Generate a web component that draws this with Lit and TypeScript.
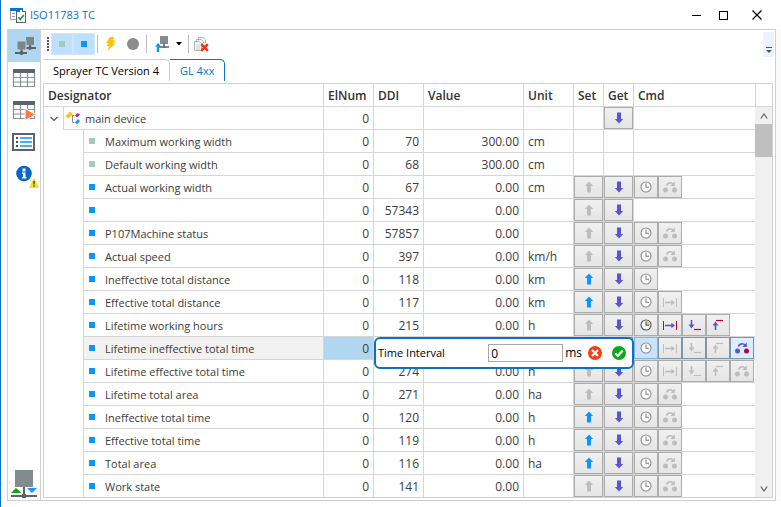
import { LitElement, html, css, svg, nothing } from "lit";
import { customElement, property } from "lit/decorators.js";
import { classMap } from "lit/directives/class-map.js";

type Cmd = "clock" | "interval" | "min" | "max" | "change";

interface Row {
  name: string;
  num?: number;
  ddi?: number;
  value?: string;
  unit?: string;
  kind?: "property" | "process";
  set?: "on" | "off";
  get?: boolean;
  cmds: Cmd[];
  active?: Cmd[];
  selected?: boolean;
}

const ROWS: Row[] = [
  { name: "Maximum working width", ddi: 70, value: "300.00", unit: "cm", kind: "property", cmds: [] },
  { name: "Default working width", ddi: 68, value: "300.00", unit: "cm", kind: "property", cmds: [] },
  { name: "Actual working width", ddi: 67, value: "0.00", unit: "cm", set: "off", get: true, cmds: ["clock", "change"] },
  { name: "", ddi: 57343, value: "0.00", unit: "", set: "off", get: true, cmds: [] },
  { name: "P107Machine status", ddi: 57857, value: "0.00", unit: "", set: "off", get: true, cmds: ["clock", "change"] },
  { name: "Actual speed", ddi: 397, value: "0.00", unit: "km/h", set: "off", get: true, cmds: ["clock", "change"] },
  { name: "Ineffective total distance", ddi: 118, value: "0.00", unit: "km", set: "on", get: true, cmds: ["clock"] },
  { name: "Effective total distance", ddi: 117, value: "0.00", unit: "km", set: "on", get: true, cmds: ["clock", "interval"] },
  { name: "Lifetime working hours", ddi: 215, value: "0.00", unit: "h", set: "off", get: true, cmds: ["clock", "interval", "min", "max"], active: ["clock", "interval", "min", "max"] },
  { name: "Lifetime ineffective total time", set: "off", get: true, cmds: ["clock", "interval", "min", "max", "change"], active: ["change"], selected: true },
  { name: "Lifetime effective total time", ddi: 274, value: "0.00", unit: "h", set: "off", get: true, cmds: ["clock", "interval", "min", "max", "change"] },
  { name: "Lifetime total area", ddi: 271, value: "0.00", unit: "ha", set: "off", get: true, cmds: ["clock", "change"] },
  { name: "Ineffective total time", ddi: 120, value: "0.00", unit: "h", set: "on", get: true, cmds: ["clock", "change"] },
  { name: "Effective total time", ddi: 119, value: "0.00", unit: "h", set: "on", get: true, cmds: ["clock", "change"] },
  { name: "Total area", ddi: 116, value: "0.00", unit: "ha", set: "on", get: true, cmds: ["clock", "change"] },
  { name: "Work state", ddi: 141, value: "0.00", unit: "", set: "off", get: true, cmds: ["clock", "change"] },
];

const GREY = "#bdbdbd";
const VIOLET = "#5a55d2";
const CRIMSON = "#b8003c";

const arrowUp = (color: string) => html`<svg width="10" height="12" viewBox="0 0 10 12" aria-hidden="true">
  <path d="M5 0.500 9.200 5H7V11.500H3V5H0.800Z" fill=${color} /></svg>`;
const arrowDown = (color: string) => html`<svg width="10" height="12" viewBox="0 0 10 12" aria-hidden="true">
  <path d="M5 11.500 9.200 7H7V0.500H3V7H0.800Z" fill=${color} /></svg>`;

function cmdIcon(cmd: Cmd, on: boolean) {
  const main = on ? VIOLET : GREY;
  const accent = on ? CRIMSON : GREY;
  const body = {
    clock: svg`
      <circle cx="8" cy="8" r="5" fill="#fff" stroke=${on ? "#44525e" : "#8e8e8e"} stroke-width="1.1" />
      ${on ? svg`<path d="M8 8V3.600A4.400 4.400 0 0 1 12.400 8Z" fill="#ffc864" />` : nothing}
      <path d="M8 4.500V8.200H11" fill="none" stroke=${on ? "#1f5f96" : "#808080"} stroke-width="1.100" />`,
    interval: svg`
      <path d="M1.500 4V13M14.500 4V13" stroke=${accent} stroke-width="1" />
      <path d="M3 8.500H10" stroke=${main} stroke-width="1.600" />
      <path d="M9.300 5.800 13 8.500 9.300 11.200Z" fill=${main} />`,
    min: svg`
      <path d="M5.500 3V9" stroke=${main} stroke-width="1.600" />
      <path d="M2.500 7.500H8.500L5.500 11.500Z" fill=${main} />
      <path d="M8 12.500H15" stroke=${accent} stroke-width="1.200" />`,
    max: svg`
      <path d="M5.500 7V13" stroke=${main} stroke-width="1.600" />
      <path d="M2.500 8.500H8.500L5.500 4.500Z" fill=${main} />
      <path d="M6 3.500H13" stroke=${accent} stroke-width="1.200" />`,
    change: svg`
      <circle cx="3.500" cy="11" r="2.500" fill=${main} />
      <circle cx="12.500" cy="11" r="2.500" fill=${accent} />
      <path d="M4.500 6.500C5.500 3.200 9 3 11.200 5.200" fill="none" stroke=${main} stroke-width="1.700" />
      <path d="M12.800 2.500V7H8.300Z" fill=${main} />`,
  }[cmd];
  return html`<svg width="16" height="16" viewBox="0 0 16 16" aria-hidden="true">${body}</svg>`;
}

const gridLines = svg`
  <rect x="1" y="1" width="22" height="4" fill="#5b636c" />
  <path d="M1.500 5V18.500H22.500V5M8.500 5V18.500M15.500 5V18.500M1.500 9.500H22.500M1.500 14H22.500" fill="none" stroke="#8c9296" stroke-width="1.200" />`;

const sideIcons = [
  {
    label: "Network",
    art: svg`
      <rect x="14" y="1" width="8" height="8" fill="#7b868b" />
      <path d="M18 9V13M12 12H24" stroke="#5b636c" stroke-width="2" />
      <circle cx="18" cy="12" r="2" fill="#5b636c" />
      <rect x="5" y="5" width="9" height="9" fill="#7b868b" stroke="#b1d6f0" stroke-width="1" />
      <path d="M9.500 13.500V17M3 17H15" stroke="#5b636c" stroke-width="2" />
      <circle cx="9.500" cy="17" r="2" fill="#5b636c" />`,
  },
  { label: "Table", art: gridLines },
  { label: "Run table", art: svg`${gridLines}<path d="M13 8.500 24 14.500 13 20.500Z" fill="#ff7a4b" stroke="#fff" stroke-width="1" />` },
  {
    label: "List",
    art: svg`
      <rect x="1" y="2" width="21" height="16" fill="#fff" stroke="#5b636c" stroke-width="2" />
      <path d="M4 6H6M4 10H6M4 14H6" stroke="#444c54" stroke-width="2" />
      <path d="M8 6H20M8 10H20M8 14H20" stroke="#0a96f5" stroke-width="1.500" />`,
  },
  {
    label: "Information",
    art: svg`
      <circle cx="12" cy="9.500" r="7.800" fill="#0a66cc" />
      <rect x="10.500" y="4.500" width="3" height="3" fill="#fff" />
      <path d="M10 8.500H13.500V13H14.500V14.500H10V13H11V10H10Z" fill="#fff" />
      <path d="M22 14.500 26.500 23.500H17.500Z" fill="#f5e400" stroke="#d8ce30" stroke-width="0.500" />
      <path d="M22 17V20.500M22 21.300V22.800" stroke="#4a4a86" stroke-width="1.500" />`,
  },
];

@customElement("tc-sidebar")
export class TcSidebar extends LitElement {
  static styles = css`
    :host { display: flex; flex-direction: column; width: 32px; border-right: 1px solid #d0d0d0; }
    .item { width: 32px; height: 32px; padding: 0; border: 0; background: none; display: flex; align-items: center; justify-content: center; }
    .item.active { background: #b1d6f0; }
    svg { display: block; overflow: visible; }
    .status { margin-top: auto; padding: 0 0 2px 3px; }
  `;

  render() {
    return html`
      ${sideIcons.map(
        (icon, i) => html`<button class=${classMap({ item: true, active: i === 0 })} aria-label=${icon.label}>
          <svg width="24" height="20" viewBox="0 0 24 20" aria-hidden="true">${icon.art}</svg>
        </button>`
      )}
      <div class="status">
        <svg width="26" height="28" viewBox="0 0 26 28" role="img" aria-label="Bus status">
          <rect x="4" y="0" width="18" height="17" fill="#828b8e" />
          <path d="M13 17V26M0 26H26" stroke="#5b636c" stroke-width="2" />
          <rect x="11" y="24" width="4" height="4" fill="#5b636c" />
          <path d="M5 18 10.500 23H0Z" fill="#0aaa0a" />
          <path d="M16 18H26L21 23Z" fill="#1e96ff" />
        </svg>
      </div>
    `;
  }
}

@customElement("tc-toolbar")
export class TcToolbar extends LitElement {
  static styles = css`
    :host { display: flex; align-items: center; height: 26px; margin: 0 1px 2px 6px; }
    svg { display: block; }
    button { border: 0; padding: 0; background: none; display: flex; align-items: center; justify-content: center; height: 20px; }
    .grip { width: 2px; height: 14px; background: repeating-linear-gradient(#5a5a5a 0 2px, #fff 2px 3px); margin-right: 3px; }
    .toggle { width: 20px; background: #bfe0fd; outline: 1px solid #cfe5f9; margin-right: 2px; }
    .square { width: 6px; height: 6px; background: #0a96ff; }
    .square.soft { background: #a0cdb9; }
    .rule { width: 1px; height: 18px; background: #bcbcbc; margin: 0 3px 0 1px; }
    .tool { width: 20px; margin-right: 2px; }
    .split { width: 34px; margin: 0 2px 0 1px; gap: 5px; }
    .more { width: 11px; height: 25px; margin-left: auto; background: #eaf2fc; border-radius: 2px; align-items: flex-end; padding-bottom: 4px; }
  `;

  render() {
    return html`
      <span class="grip"></span>
      <button class="toggle" aria-label="Properties"><span class="square soft"></span></button>
      <button class="toggle" aria-label="Process data"><span class="square"></span></button>
      <span class="rule"></span>
      <button class="tool" aria-label="Activate">
        <svg width="12" height="14" viewBox="0 0 12 14"><path d="M4.500 0H9.500L7.800 3.200H10.500L8 6.500H10.500L2.500 14 4.200 9.200H1.500L3.500 6.200H1Z" fill="#ffc20a" /></svg>
      </button>
      <button class="tool" aria-label="Record">
        <svg width="12" height="12" viewBox="0 0 12 12"><circle cx="6" cy="6" r="6" fill="#8c8c8c" /></svg>
      </button>
      <span class="rule"></span>
      <button class="split" aria-label="Upload">
        <svg width="16" height="16" viewBox="0 0 16 16">
          <rect x="5" y="0" width="8" height="8" fill="#828b8e" />
          <path d="M9 8V12M4 11H14" stroke="#5b636c" stroke-width="1.600" />
          <path d="M3 7 6 10.500H4.200V16H1.800V10.500H0Z" fill="#0a96ff" />
        </svg>
        <svg width="6" height="4" viewBox="0 0 6 4"><path d="M0 0H6L3 3.500Z" fill="#000" /></svg>
      </button>
      <span class="rule"></span>
      <button class="tool" aria-label="Delete all">
        <svg width="16" height="15" viewBox="0 0 16 15">
          <path d="M4.500 3.500V0.500H9L11.500 2.500V6M2.500 5.500V2.500H7L9.500 4.500V6M0.500 4.500H5L7.500 6.500V13.500H0.500Z" fill="#fff" stroke="#aeb3b5" stroke-width="1" />
          <path d="M2 8H6M2 10H6M2 12H6" stroke="#c4c8ca" stroke-width="1" />
          <path d="M7.200 7.200 13.800 13.800M13.800 7.200 7.200 13.800" stroke="#f03214" stroke-width="2.400" />
        </svg>
      </button>
      <button class="more" aria-label="More">
        <svg width="6" height="6" viewBox="0 0 6 6"><path d="M0 0.500H6" stroke="#555" /><path d="M0 3H6L3 6Z" fill="#555" /></svg>
      </button>
    `;
  }
}

@customElement("tc-interval-popup")
export class TcIntervalPopup extends LitElement {
  static styles = css`
    :host { box-sizing: border-box; display: flex; align-items: center; border: 2px solid #0a72c0; border-radius: 6px; background: #fff; color: #000; padding: 0 6px 0 2px; }
    label { flex: 1; text-align: left; font-size: 11px; }
    input { box-sizing: border-box; width: 75px; height: 18px; border: 1px solid #a8a8ad; padding: 0 2px; font: inherit; color: inherit; background: #fff; }
    .unit { margin: 0 6px 0 2px; }
    button { border: 0; padding: 0; background: none; width: 14px; height: 14px; }
    .ok { margin-left: 10px; }
    svg { display: block; }
  `;

  render() {
    return html`
      <label for="interval">Time Interval</label>
      <input id="interval" type="text" value="0" />
      <span class="unit">ms</span>
      <button aria-label="Cancel">
        <svg width="14" height="14" viewBox="0 0 14 14"><circle cx="7" cy="7" r="7" fill="#f53c14" /><path d="M4 4 10 10M10 4 4 10" stroke="#fff" stroke-width="2.200" /></svg>
      </button>
      <button class="ok" aria-label="Confirm">
        <svg width="14" height="14" viewBox="0 0 14 14"><circle cx="7" cy="7" r="7" fill="#0aaa14" /><path d="M3.300 7.200 6 9.800 10.700 4.600" fill="none" stroke="#fff" stroke-width="2.200" /></svg>
      </button>
    `;
  }
}

@customElement("tc-device-table")
export class TcDeviceTable extends LitElement {
  @property({ attribute: false }) rows: Row[] = [];

  static styles = css`
    :host { display: flex; border: 1px solid #d0d0d0; margin: 0 2px 2px 2px; min-height: 0; overflow: hidden; color: #3c3c3c; }
    table { flex: 1; min-width: 0; table-layout: fixed; border-collapse: separate; border-spacing: 0; align-self: flex-start; }
    .tree { width: 20px; }
    .narrow { width: 50px; }
    .wide { width: 100px; }
    .act { width: 30px; }
    .cmd { width: 121px; }
    tr { height: 23px; }
    th, td { box-sizing: border-box; height: 23px; padding: 2px 4px 0; border-right: 1px solid #d6d6d6; border-bottom: 1px solid #d6d6d6; text-align: left; white-space: nowrap; line-height: 16px; vertical-align: middle; }
    th { font-weight: 600; color: #333; }
    th:last-child, td:last-child { border-right: 0; }
    td.blank { border-bottom: 0; padding: 0; }
    td.num { text-align: right; }
    td.name { padding-left: 5px; font-size: 11px; }
    td.ops { padding: 0; }
    .label { display: flex; align-items: center; gap: 10px; }
    .label.root { gap: 4px; margin-left: -4px; }
    .mark { flex: none; width: 6px; height: 6px; margin-bottom: 2px; background: #0a96ff; }
    .mark.property { background: #a0cdb9; }
    .expander { display: flex; width: 19px; height: 22px; padding: 0; border: 0; background: none; align-items: center; justify-content: center; }
    .ops-row { display: flex; }
    .op { box-sizing: border-box; flex: none; width: 29px; height: 22px; padding: 0; border: 1px solid #acacac; background: linear-gradient(#f0f0f0, #e5e5e5); display: flex; align-items: center; justify-content: center; }
    .op.small { width: 24px; }
    svg { display: block; }
    .selected .name { background: #f2f2f2; }
    .selected .element { background: #b1d6f0; }
    .selected .op { border-color: #7e96aa; }
    .selected .ops { background: #dcebf8; }
    .selected .op.clock { background: #c9e3fb; border-color: #7eb4ea; }
    .selected .op.change { background: #dcecfa; }
    .anchor { position: relative; }
    .popup { position: absolute; left: 0; top: 0; width: 260px; height: 32px; z-index: 1; }
    .side { flex: none; width: 17px; display: flex; flex-direction: column; }
    .corner { box-sizing: border-box; height: 23px; border-left: 1px solid #d6d6d6; border-bottom: 1px solid #d6d6d6; }
    .track { flex: 1; display: flex; flex-direction: column; background: #f0f0f0; }
    .track button { height: 17px; padding: 0; border: 0; background: none; display: flex; align-items: center; justify-content: center; }
    .thumb { height: 33px; background: #bfbfbf; }
    .down { margin-top: auto; }
  `;

  private op(label: string, art: unknown, extra = "") {
    return html`<button class="op ${extra}" aria-label=${label}>${art}</button>`;
  }

  private row(r: Row) {
    return html`<tr class=${classMap({ selected: !!r.selected })}>
      <td class="blank" colspan="2"></td>
      <td class="name"><span class="label"><span class="mark ${r.kind ?? "process"}"></span>${r.name}</span></td>
      <td class="num element">${r.num ?? 0}</td>
      <td class="num anchor">${r.ddi}${r.selected ? html`<tc-interval-popup class="popup"></tc-interval-popup>` : nothing}</td>
      <td class="num">${r.value}</td>
      <td>${r.unit}</td>
      <td class="ops">${r.set ? this.op("Set", arrowUp(r.set === "on" ? "#0a96ff" : GREY)) : nothing}</td>
      <td class="ops">${r.get ? this.op("Get", arrowDown(VIOLET)) : nothing}</td>
      <td class="ops"><div class="ops-row">${r.cmds.map((c) => this.op(c, cmdIcon(c, !!r.active?.includes(c)), `small ${c}`))}</div></td>
    </tr>`;
  }

  render() {
    return html`
      <table>
        <colgroup>
          <col class="tree" /><col class="tree" /><col />
          <col class="narrow" /><col class="narrow" /><col class="wide" /><col class="narrow" />
          <col class="act" /><col class="act" /><col class="cmd" />
        </colgroup>
        <thead>
          <tr><th colspan="3">Designator</th><th>ElNum</th><th>DDI</th><th>Value</th><th>Unit</th><th>Set</th><th>Get</th><th>Cmd</th></tr>
        </thead>
        <tbody>
          <tr>
            <td class="blank">
              <button class="expander" aria-label="Collapse main device">
                <svg width="8" height="6" viewBox="0 0 8 6"><path d="M0.500 1 4 4.500 7.500 1" fill="none" stroke="#555" stroke-width="1.200" /></svg>
              </button>
            </td>
            <td class="name" colspan="2">
              <span class="label root">
                <svg width="16" height="16" viewBox="0 0 16 16" aria-hidden="true">
                  <path d="M0.500 5 5 0.500 8 3 3.500 7.500Z" fill="#ffc80a" />
                  <path d="M9.500 4.500H7.500V11.500H9.500" fill="none" stroke="#8a8f92" />
                  <path d="M10 4.500 12.500 2 15 3.500 12 6.500Z" fill="#d2148c" />
                  <path d="M10 11.500 13 8 15 10 12 13.500Z" fill="#1e96f0" />
                </svg>main device</span>
            </td>
            <td class="num">0</td><td></td><td></td><td></td><td></td>
            <td class="ops">${this.op("Get", arrowDown(VIOLET))}</td><td></td>
          </tr>
          ${this.rows.map((r) => this.row(r))}
        </tbody>
      </table>
      <div class="side">
        <div class="corner"></div>
        <div class="track">
          <button aria-label="Scroll up"><svg width="8" height="6" viewBox="0 0 8 6"><path d="M0.800 5.500 4 1 7.200 5.500" fill="none" stroke="#606060" stroke-width="1.200" /></svg></button>
          <div class="thumb"></div>
          <button class="down" aria-label="Scroll down"><svg width="8" height="6" viewBox="0 0 8 6"><path d="M0.800 0.500 4 5 7.200 0.500" fill="none" stroke="#606060" stroke-width="1.200" /></svg></button>
        </div>
      </div>
    `;
  }
}

@customElement("app-root")
export class AppRoot extends LitElement {
  static styles = css`
    :host { box-sizing: border-box; display: flex; flex-direction: column; height: 100vh; border-left: 1px solid #0a72c8; background: #fff; padding-bottom: 6px; font: 12px/16px "Open Sans", "Noto Sans", sans-serif; overflow: hidden; }
    .titlebar { display: flex; align-items: center; height: 29px; flex: none; padding-left: 9px; }
    .title { flex: 1; margin: 0 0 0 4px; font-size: 11px; font-weight: 400; color: #0a72c8; }
    .window-btn { width: 27px; height: 28px; padding: 0; border: 0; background: none; display: flex; align-items: center; justify-content: center; }
    .close { margin: 0 11px 0 6px; }
    svg { display: block; }
    .frame { flex: 1; min-height: 0; display: flex; background: #fafafa; padding-right: 5px; }
    .gutter { width: 6px; background: #fff; }
    .panel { flex: 1; min-width: 0; display: flex; border: 1px solid #d0d0d0; background: #fff; }
    .content { flex: 1; min-width: 0; display: flex; flex-direction: column; padding-top: 1px; }
    .tabs { display: flex; height: 22px; margin: 0 0 2px 2px; }
    .tab { box-sizing: border-box; height: 22px; padding: 0 10px; border: 1px solid #d0d0d0; border-width: 1px 1px 0 0; border-radius: 0 5px 0 0; background: #fff; font: inherit; font-size: 11px; color: #000; }
    .tab.active { border-color: #0a72c8; color: #0a72c8; }
    .table { flex: 1; }
  `;

  render() {
    return html`
      <header class="titlebar">
        <svg width="16" height="16" viewBox="0 0 16 16" aria-hidden="true">
          <rect x="0" y="1" width="13" height="3" fill="#0a72d8" />
          <path d="M0.500 4V12.500H6M2 6.500H5M2 9.500H5" fill="none" stroke="#9aa0a4" />
          <rect x="6.500" y="4.500" width="9" height="11" fill="#fff" stroke="#5b636c" />
          <path d="M9.500 5V2.500H12.500V5" fill="#fff" stroke="#5b636c" />
          <path d="M8.300 10.200 10.300 12.400 13.800 8" fill="none" stroke="#14a046" stroke-width="1.700" />
        </svg>
        <h1 class="title">ISO11783 TC</h1>
        <button class="window-btn" aria-label="Minimize"><svg width="10" height="10" viewBox="0 0 10 10"><path d="M0 5.500H9" stroke="#000" /></svg></button>
        <button class="window-btn" aria-label="Maximize"><svg width="10" height="10" viewBox="0 0 10 10"><rect x="0.500" y="1.500" width="8" height="8" fill="none" stroke="#000" /></svg></button>
        <button class="window-btn close" aria-label="Close"><svg width="10" height="10" viewBox="0 0 10 10"><path d="M0.500 0.500 9.500 9.500M9.500 0.500 0.500 9.500" stroke="#000" stroke-width="1.200" /></svg></button>
      </header>
      <main class="frame">
        <div class="gutter"></div>
        <div class="panel">
          <tc-sidebar></tc-sidebar>
          <div class="content">
            <tc-toolbar></tc-toolbar>
            <div class="tabs" role="tablist">
              <button class="tab" role="tab" aria-selected="false">Sprayer TC Version 4</button>
              <button class="tab active" role="tab" aria-selected="true">GL 4xx</button>
            </div>
            <tc-device-table class="table" .rows=${ROWS}></tc-device-table>
          </div>
        </div>
      </main>
    `;
  }
}
